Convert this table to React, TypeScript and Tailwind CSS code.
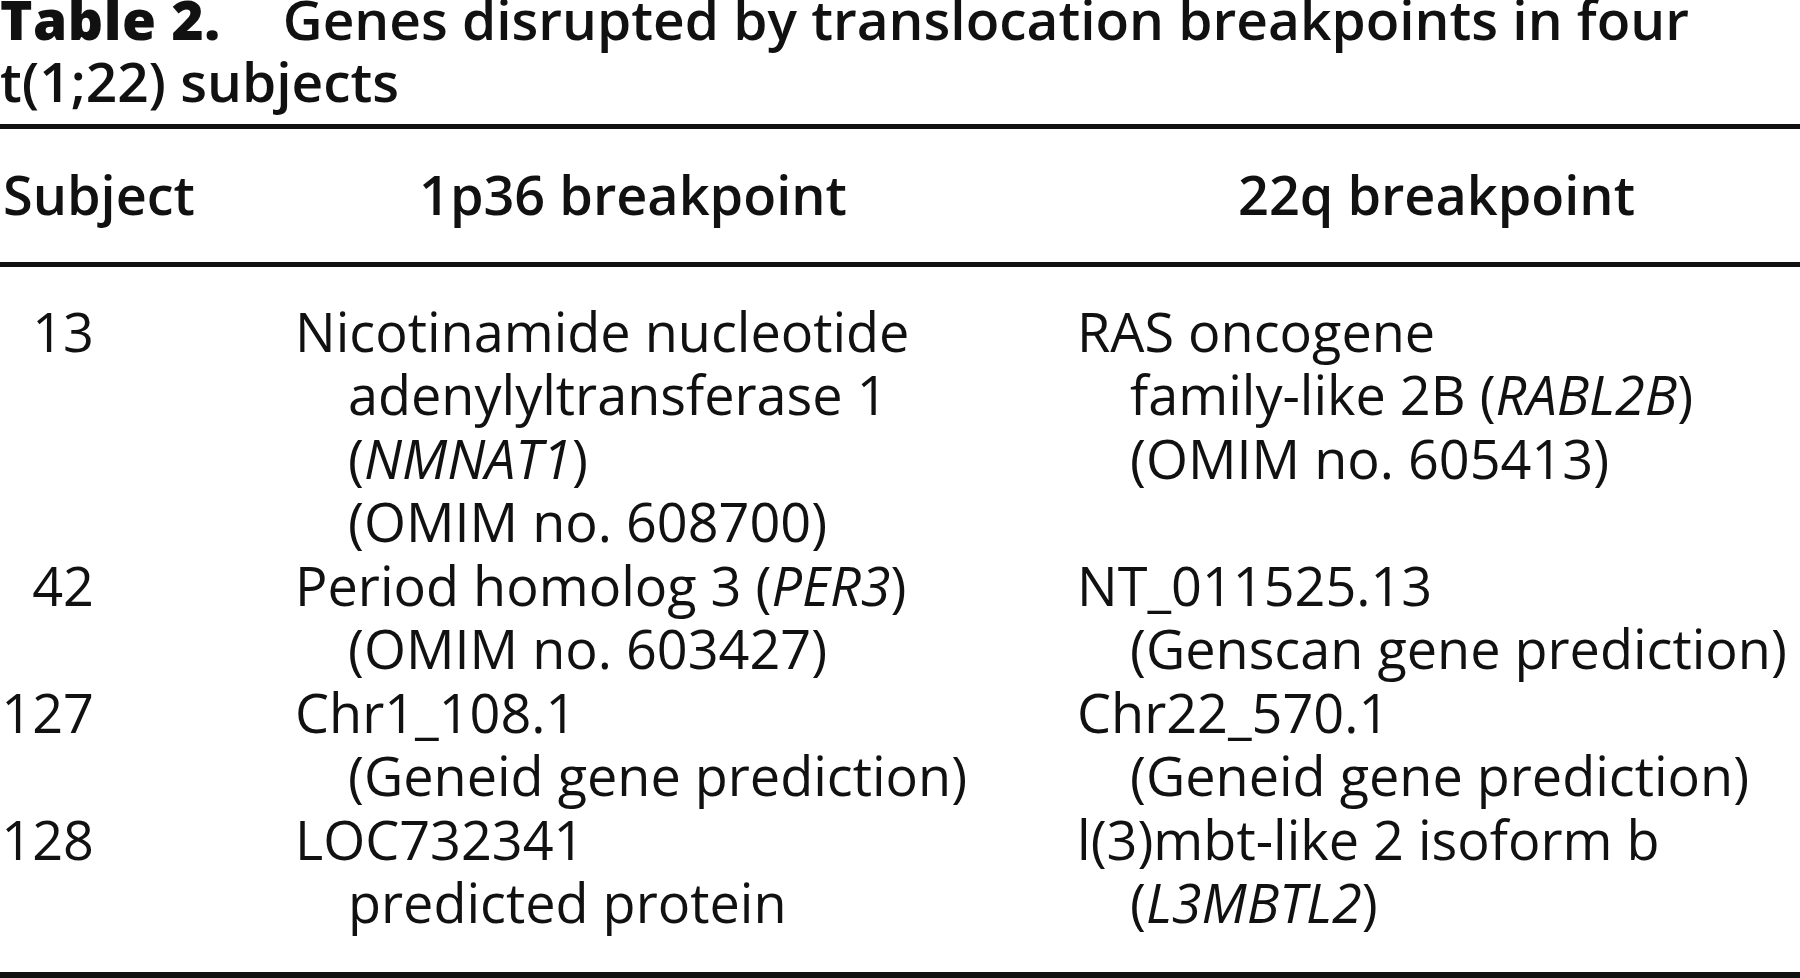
const rows = [
  {
    subject: "13",
    left: [
      <>Nicotinamide nucleotide</>,
      <>adenylyltransferase 1</>,
      <>(<i>NMNAT1</i>)</>,
      <>(OMIM no. 608700)</>,
    ],
    right: [
      <>RAS oncogene</>,
      <>family-like 2B (<i>RABL2B</i>)</>,
      <>(OMIM no. 605413)</>,
    ],
  },
  {
    subject: "42",
    left: [<>Period homolog 3 (<i>PER3</i>)</>, <>(OMIM no. 603427)</>],
    right: [<>NT_011525.13</>, <>(Genscan gene prediction)</>],
  },
  {
    subject: "127",
    left: [<>Chr1_108.1</>, <>(Geneid gene prediction)</>],
    right: [<>Chr22_570.1</>, <>(Geneid gene prediction)</>],
  },
  {
    subject: "128",
    left: [<>LOC732341</>, <>predicted protein</>],
    right: [<>l(3)mbt-like 2 isoform b</>, <>(<i>L3MBTL2</i>)</>],
  },
];

function Lines({ lines }: { lines: React.ReactNode[] }) {
  return (
    <div className="whitespace-nowrap">
      {lines.map((l, i) => (
        <div key={i} className={i === 0 ? "" : "pl-[53px]"}>
          {l}
        </div>
      ))}
    </div>
  );
}

export default function App() {
  return (
    <div
      className="w-[1800px] h-[978px] overflow-hidden bg-white text-[#111]"
      style={{ fontFamily: "'Open Sans', sans-serif" }}
    >
      <div className="-mt-[12px] text-[55px] leading-[62px] font-semibold whitespace-nowrap">
        <span className="font-extrabold tracking-[0.01em] mr-[62px]">Table 2.</span>
        Genes disrupted by translocation breakpoints in four
        <br />
        t(1;22) subjects
      </div>
      <div className="mt-[12px] h-[5px] bg-[#111]" />

      <div className="grid grid-cols-[295px_782px_1fr] pt-[34px] pb-[35px] text-[54px] leading-[63.5px] font-semibold whitespace-nowrap">
        <div className="pl-[3px]">Subject</div>
        <div className="pl-[124px]">1p36 breakpoint</div>
        <div className="pl-[161px]">22q breakpoint</div>
      </div>
      <div className="h-[5px] bg-[#111]" />

      <div className="pt-[33px] pb-[37px] text-[54px] leading-[63.5px]">
        {rows.map((r) => (
          <div key={r.subject} className="grid grid-cols-[295px_782px_1fr] items-start">
            <div className="w-[94px] text-right">{r.subject}</div>
            <Lines lines={r.left} />
            <Lines lines={r.right} />
          </div>
        ))}
      </div>
      <div className="h-[6px] bg-[#111]" />
    </div>
  );
}
